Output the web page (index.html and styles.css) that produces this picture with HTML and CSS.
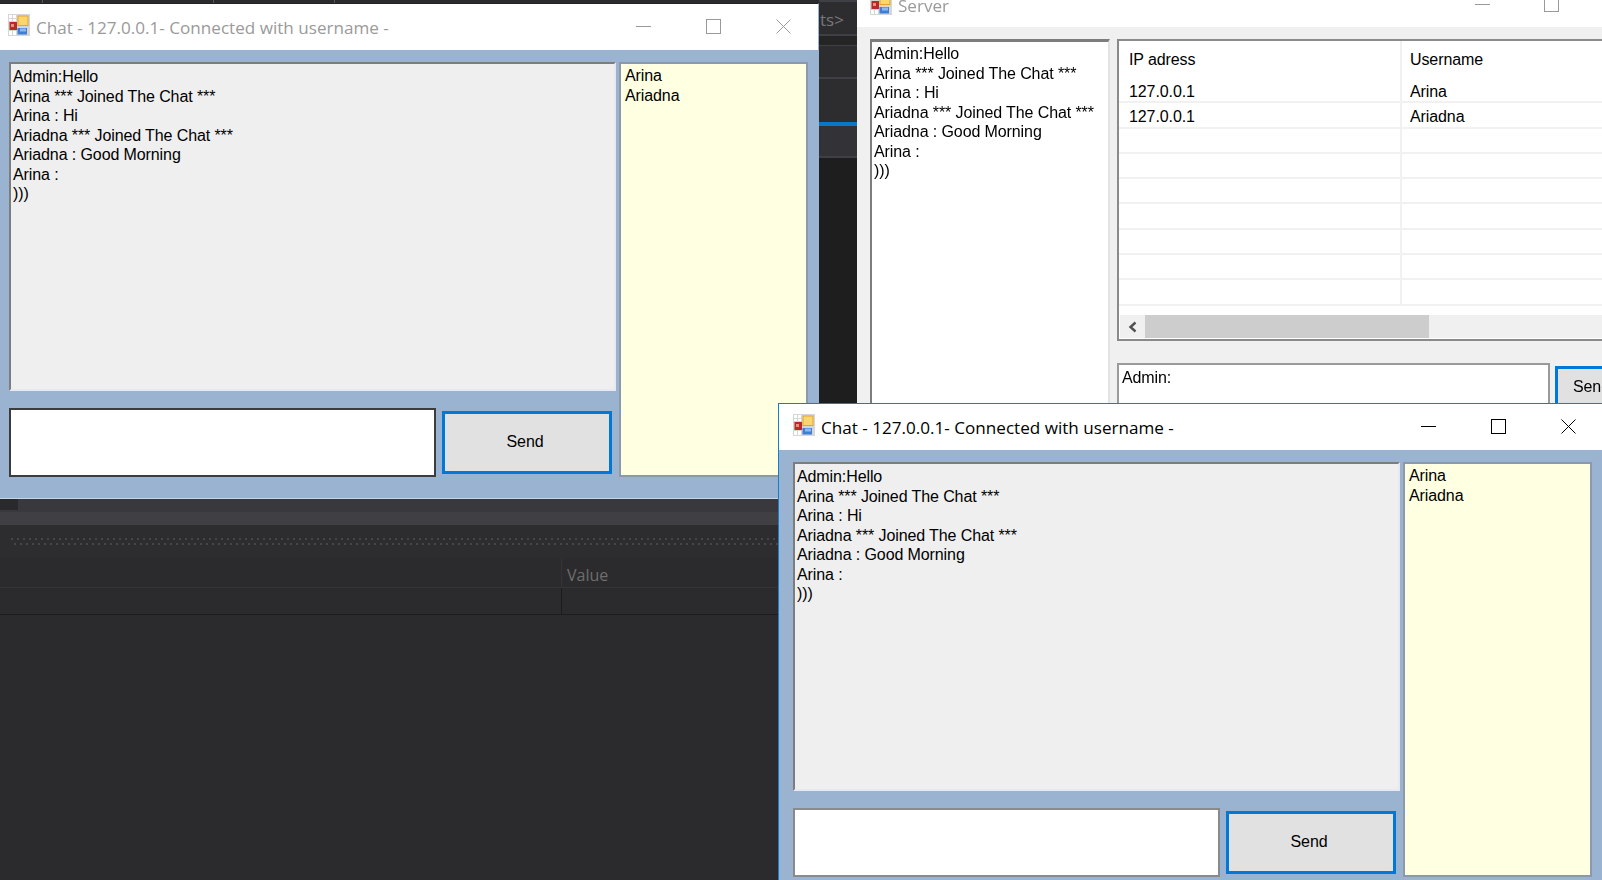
FILE: index.html
```html
<!DOCTYPE html>
<html lang="en">
<head>
    <meta charset="UTF-8">
    <meta name="viewport" content="width=device-width, initial-scale=1.0">
    <title>Chat and Server</title>
    <link rel="stylesheet" href="styles.css">
</head>
<body>
    <svg class="defs" width="0" height="0">
        <symbol id="app-icon" viewBox="0 0 22 22">
            <rect width="22" height="22" fill="#d6d6d6"/>
            <rect x="1" y="1" width="3" height="3" fill="#fff"/>
            <rect x="5" y="1" width="3" height="3" fill="#fff"/>
            <rect x="1" y="5" width="3" height="2" fill="#fff"/>
            <rect x="5" y="5" width="3" height="2" fill="#fff"/>
            <rect x="1" y="17" width="3" height="4" fill="#fff"/>
            <rect x="5" y="17" width="3" height="4" fill="#fff"/>
            <rect x="1.5" y="8" width="7.5" height="8" fill="#b92a25"/>
            <rect x="3" y="10" width="3" height="3" fill="#ee8a80"/>
            <rect x="9.5" y="1.5" width="11" height="10.5" fill="#e0a52a"/>
            <rect x="10.5" y="2.5" width="9" height="8.5" fill="#fbd66e"/>
            <rect x="9.5" y="14" width="9.5" height="6.5" fill="#3f7ed8"/>
            <rect x="12" y="14.5" width="6" height="3" fill="#8fb9ee"/>
        </symbol>
        <symbol id="win-min" viewBox="0 0 15 15">
            <path d="M0 7.5H15" stroke="currentColor" fill="none"/>
        </symbol>
        <symbol id="win-max" viewBox="0 0 15 15">
            <rect x=".5" y=".5" width="14" height="14" stroke="currentColor" fill="none"/>
        </symbol>
        <symbol id="win-close" viewBox="0 0 15 15">
            <path d="M.5 .5L14.5 14.5M14.5 .5L.5 14.5" stroke="currentColor" fill="none"/>
        </symbol>
    </svg>

    <!-- dark IDE behind the windows -->
    <div class="ide-strip">
        <i class="tick tick-a"></i>
        <i class="tick tick-b"></i>
        <i class="tick tick-c"></i>
    </div>

    <div class="ide-side">
        <div class="side-row side-crumb">ts&gt;</div>
        <div class="side-row side-gap"></div>
        <div class="side-row side-tool"></div>
        <div class="side-row side-tool2"></div>
        <div class="side-row side-tab"></div>
    </div>

    <div class="ide-bottom">
        <div class="pane-tabs"><span class="pane-tab"></span></div>
        <div class="pane-bar"></div>
        <div class="pane-grip"><div class="grip-dots"></div></div>
        <div class="watch-head">
            <div class="watch-name"></div>
            <div class="watch-value">Value</div>
        </div>
        <div class="watch-row">
            <div class="watch-name"></div>
            <div class="watch-value"></div>
        </div>
    </div>

    <!-- server window -->
    <div class="win server">
        <div class="titlebar server-title">
            <svg class="app-icon"><use href="#app-icon"/></svg>
            <span class="title-text">Server</span>
            <div class="controls server-controls">
                <svg class="ctl"><use href="#win-min"/></svg>
                <svg class="ctl"><use href="#win-max"/></svg>
            </div>
        </div>
        <div class="server-body">
            <div class="log server-log">Admin:Hello
Arina *** Joined The Chat ***
Arina : Hi
Ariadna *** Joined The Chat ***
Ariadna : Good Morning
Arina :
)))</div>
            <div class="server-main">
                <div class="clients">
                    <div class="clients-head">
                        <div class="col-ip">IP adress</div>
                        <div class="col-name">Username</div>
                    </div>
                    <div class="clients-row"><div class="col-ip">127.0.0.1</div><div class="col-name">Arina</div></div>
                    <div class="clients-row"><div class="col-ip">127.0.0.1</div><div class="col-name">Ariadna</div></div>
                    <div class="clients-row"><div class="col-ip"></div><div class="col-name"></div></div>
                    <div class="clients-row"><div class="col-ip"></div><div class="col-name"></div></div>
                    <div class="clients-row"><div class="col-ip"></div><div class="col-name"></div></div>
                    <div class="clients-row"><div class="col-ip"></div><div class="col-name"></div></div>
                    <div class="clients-row"><div class="col-ip"></div><div class="col-name"></div></div>
                    <div class="clients-row"><div class="col-ip"></div><div class="col-name"></div></div>
                    <div class="clients-row"><div class="col-ip"></div><div class="col-name"></div></div>
                    <div class="hscroll">
                        <svg class="hscroll-arrow" viewBox="0 0 10 12"><path d="M7.5 1.5L2.5 6L7.5 10.5" stroke="#505050" stroke-width="2.4" fill="none"/></svg>
                        <div class="hscroll-thumb"></div>
                    </div>
                </div>
                <div class="server-send">
                    <div class="server-input">Admin:</div>
                    <button class="send-btn server-btn">Send</button>
                </div>
            </div>
        </div>
    </div>

    <!-- client window, not focused -->
    <div class="win chat chat-idle">
        <div class="titlebar">
            <svg class="app-icon"><use href="#app-icon"/></svg>
            <span class="title-text">Chat - 127.0.0.1- Connected with username -</span>
            <div class="controls">
                <svg class="ctl"><use href="#win-min"/></svg>
                <svg class="ctl"><use href="#win-max"/></svg>
                <svg class="ctl"><use href="#win-close"/></svg>
            </div>
        </div>
        <div class="chat-body">
            <div class="chat-left">
                <div class="log chat-log">Admin:Hello
Arina *** Joined The Chat ***
Arina : Hi
Ariadna *** Joined The Chat ***
Ariadna : Good Morning
Arina :
)))</div>
                <div class="chat-send">
                    <div class="chat-input chat-input-dark"></div>
                    <button class="send-btn">Send</button>
                </div>
            </div>
            <div class="user-list">Arina
Ariadna</div>
        </div>
    </div>

    <!-- client window, focused -->
    <div class="win chat chat-active">
        <div class="titlebar">
            <svg class="app-icon"><use href="#app-icon"/></svg>
            <span class="title-text">Chat - 127.0.0.1- Connected with username -</span>
            <div class="controls">
                <svg class="ctl"><use href="#win-min"/></svg>
                <svg class="ctl"><use href="#win-max"/></svg>
                <svg class="ctl"><use href="#win-close"/></svg>
            </div>
        </div>
        <div class="chat-body">
            <div class="chat-left">
                <div class="log chat-log">Admin:Hello
Arina *** Joined The Chat ***
Arina : Hi
Ariadna *** Joined The Chat ***
Ariadna : Good Morning
Arina :
)))</div>
                <div class="chat-send">
                    <div class="chat-input"></div>
                    <button class="send-btn">Send</button>
                </div>
            </div>
            <div class="user-list">Arina
Ariadna</div>
        </div>
    </div>
</body>
</html>
```

FILE: styles.css
```css
html, body {
    height: 100%;
}

body {
    margin: 0;
    position: relative;
    overflow: hidden;
    background-color: #1e1e1e;
    font-family: "Liberation Sans", Arial, sans-serif;
    font-size: 16px;
    color: #000;
    /* the shot was scaled up, everything is a bit soft */
    filter: blur(0.35px);
}

.defs {
    position: absolute;
}

/* ide behind */
.ide-strip {
    position: absolute;
    left: 0;
    top: 0;
    width: 820px;
    height: 4px;
    background-color: #2a2a2c;
}

.tick {
    position: absolute;
    top: 0;
    width: 1px;
    height: 4px;
    background-color: #555;
}

.tick-a { left: 42px; }
.tick-b { left: 213px; }
.tick-c { left: 334px; }

.ide-side {
    position: absolute;
    left: 819px;
    top: 0;
    width: 38px;
    height: 410px;
    background-color: #1e1e1e;
    border-top: 2px solid #3f3f46;
    box-sizing: border-box;
}

.side-row {
    box-sizing: border-box;
    border-bottom: 2px solid #3f3f46;
}

.side-crumb {
    height: 34px;
    background-color: #2d2d30;
    color: #777;
    font-family: "Open Sans", sans-serif;
    font-size: 17px;
    line-height: 35px;
    padding-left: 1px;
}

.side-gap {
    height: 10px;
    background-color: #252526;
    border-bottom-width: 1px;
}

.side-tool {
    height: 33px;
    background-color: #2d2d30;
}

.side-tool2 {
    height: 47px;
    background-color: #2d2d30;
    border-bottom: 4px solid #0a78c8;
}

.side-tab {
    height: 32px;
    background-color: #333337;
}

.ide-bottom {
    position: absolute;
    left: 0;
    top: 499px;
    width: 790px;
    bottom: 0;
    display: flex;
    flex-direction: column;
    background-color: #2b2b2d;
    color: #6e6e6e;
}

.pane-tabs {
    height: 13px;
    background-color: #39393d;
}

.pane-tab {
    display: block;
    width: 18px;
    height: 11px;
    background-color: #2a2a2c;
}

.pane-bar {
    height: 13px;
    background-color: #3f3f44;
}

.pane-grip {
    height: 33px;
    box-sizing: border-box;
    padding: 13px 0 0 11px;
    background-color: #2d2d30;
}

.grip-dots {
    height: 8px;
    background-image:
        linear-gradient(90deg, #47474b 2px, transparent 2px),
        linear-gradient(90deg, #47474b 2px, transparent 2px);
    background-size: 6px 2px, 6px 2px;
    background-position: 0 0, 3px 5px;
    background-repeat: repeat-x;
}

.watch-head, .watch-row {
    display: flex;
    box-sizing: border-box;
}

.watch-head {
    height: 30px;
    border-bottom: 1px solid #343436;
    line-height: 34px;
    font-family: "Open Sans", sans-serif;
    font-size: 16px;
}

.watch-row {
    height: 27px;
    border-bottom: 1px solid #1c1c1e;
}

.watch-name {
    width: 561px;
}

.watch-value {
    flex: 1;
    padding-left: 5px;
    border-left: 1px solid #343436;
}

.watch-row .watch-value {
    border-left-color: #1c1c1e;
}

/* windows */
.win {
    position: absolute;
    box-sizing: border-box;
}

.titlebar {
    height: 46px;
    display: flex;
    align-items: center;
    background-color: #fff;
    font-family: "Open Sans", sans-serif;
    font-size: 17.1px;
    padding-left: 14px;
}

.app-icon {
    width: 22px;
    height: 22px;
    flex: none;
    margin-top: -4px;
}

.title-text {
    margin-left: 6px;
    margin-top: 1px;
}

.controls {
    margin-left: auto;
    display: flex;
    gap: 55px;
    padding-right: 27px;
    margin-top: -2px;
}

.ctl {
    width: 15px;
    height: 15px;
}

.chat {
    left: 778px;
    top: 403px;
    width: 826px;
    height: 496px;
    border: 1px solid #0f7fd2;
    background-color: #9ab3d0;
}

.chat-idle {
    left: -7px;
    top: 3px;
    border-color: #222 #9ab3d0 #c5d5e6 #9ab3d0;
}

.chat-idle .titlebar {
    color: #9a9a9a;
}

.chat-idle .ctl {
    color: #999;
}

.chat-active .titlebar {
    color: #000;
}

.chat-active .ctl {
    color: #000;
}

.chat-body {
    display: flex;
    gap: 3px;
    padding: 12px 10px 0 15px;
    letter-spacing: -0.1px;
}

.chat-active .chat-body {
    padding-left: 14px;
}

.chat-left {
    width: 607px;
    display: flex;
    flex-direction: column;
    gap: 17px;
}

.log {
    box-sizing: border-box;
    white-space: pre-line;
    line-height: 19.5px;
    padding: 3px 2px;
    border: 2px solid;
}

.chat-log {
    height: 329px;
    background-color: #efefef;
    border-color: #7d7d7d #e6eaf0 #e6eaf0 #7d7d7d;
}

.chat-send {
    display: flex;
    align-items: center;
    gap: 6px;
}

.chat-input {
    width: 427px;
    height: 69px;
    box-sizing: border-box;
    background-color: #fff;
    border: 2px solid #8a8a8a;
}

.chat-input-dark {
    border-color: #3c3c3c;
}

.send-btn {
    width: 170px;
    height: 63px;
    background-color: #e1e1e1;
    border: 3px solid #0078d7;
    font-family: inherit;
    font-size: 16px;
    letter-spacing: -0.1px;
    color: #000;
    padding: 0 4px 2px 0;
}

.user-list {
    box-sizing: border-box;
    width: 189px;
    height: 415px;
    background-color: #ffffe1;
    border: 2px solid #8c99ab;
    white-space: pre-line;
    line-height: 19.5px;
    padding: 2px 4px;
}

/* server */
.server {
    left: 857px;
    top: -13px;
    width: 800px;
    height: 423px;
    background-color: #f0f0f0;
}

.server-title {
    height: 40px;
    padding-left: 13px;
    color: #9a9a9a;
}

.server-title .app-icon {
    margin-top: -6px;
}

.server-title .title-text {
    margin-left: 6px;
    margin-top: -3px;
}

.server-controls {
    position: absolute;
    left: 618px;
    top: 10px;
    margin: 0;
    gap: 54px;
    padding: 0;
}

.server-controls .ctl {
    color: #999;
}

.server-body {
    display: flex;
    gap: 7px;
    padding: 12px 0 0 13px;
    letter-spacing: -0.1px;
}

.server-log {
    flex: none;
    width: 240px;
    height: 380px;
    background-color: #fff;
    border-color: #7d7d7d #e3e3e3 #e3e3e3 #7d7d7d;
    border-width: 3px 2px 2px 2px;
    padding: 2px 2px;
}

.server-main {
    width: 540px;
    flex: none;
    display: flex;
    flex-direction: column;
    gap: 22px;
}

.clients {
    box-sizing: border-box;
    height: 302px;
    position: relative;
    background-color: #fff;
    border: 2px solid;
    border-color: #8a8a8a #e3e3e3 #8a8a8a #8a8a8a;
}

.clients-head, .clients-row {
    display: flex;
    box-sizing: border-box;
}

.clients-head {
    height: 37px;
    line-height: 38px;
}

.clients-row {
    height: 25.3px;
    line-height: 27px;
    border-bottom: 2px solid #f1f1f1;
}

.col-ip {
    width: 281px;
    box-sizing: border-box;
    padding-left: 10px;
}

.col-name {
    flex: 1;
    padding-left: 8px;
    border-left: 2px solid #f1f1f1;
}

.hscroll {
    position: absolute;
    left: 1px;
    right: 0;
    bottom: 1px;
    height: 23px;
    display: flex;
    align-items: center;
    background-color: #f0f0f0;
}

.hscroll-arrow {
    width: 10px;
    height: 12px;
    margin-left: 8px;
}

.hscroll-thumb {
    width: 284px;
    height: 23px;
    margin-left: 7px;
    background-color: #cdcdcd;
}

.server-send {
    display: flex;
    gap: 5px;
    align-items: flex-start;
}

.server-input {
    flex: none;
    box-sizing: border-box;
    width: 433px;
    height: 60px;
    padding: 4px 3px;
    background-color: #fff;
    border: 2px solid #9a9a9a;
}

.server-btn {
    flex: none;
    margin-top: 3px;
    height: 42px;
    padding: 0 0 0 15px;
    text-align: left;
}
```
